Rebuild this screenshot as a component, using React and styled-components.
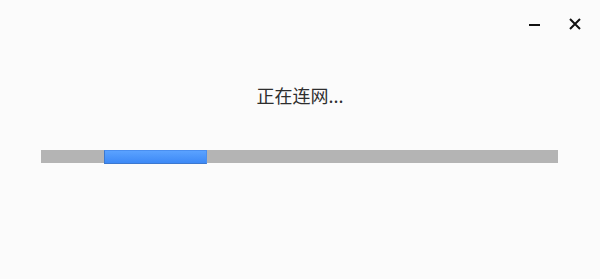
import React from "react";
import styled, { createGlobalStyle } from "styled-components";

const GlobalStyle = createGlobalStyle`
  html, body {
    margin: 0;
    padding: 0;
    background: #fbfbfb;
  }
  * {
    box-sizing: border-box;
  }
`;

const Window = styled.div`
  width: 600px;
  height: 279px;
  background: #fbfbfb;
  display: flex;
  flex-direction: column;
  font-family: "Noto Sans CJK SC", "Noto Sans", sans-serif;
`;

const TitleBar = styled.div`
  display: flex;
  justify-content: flex-end;
  gap: 19px;
  padding: 13px 14px 0 0;
  height: 35px;
`;

const WinButton = styled.button`
  width: 22px;
  height: 22px;
  padding: 0;
  border: none;
  background: transparent;
  display: flex;
  align-items: center;
  justify-content: center;
  color: #111;
  cursor: pointer;
`;

const Message = styled.div`
  margin-top: 48px;
  height: 24px;
  line-height: 24px;
  text-align: center;
  font-size: 18px;
  color: #2e2e2e;
`;

const Track = styled.div`
  position: relative;
  margin: 43px 42px 0 41px;
  height: 13px;
  background: #b4b4b4;
`;

const Thumb = styled.div`
  position: absolute;
  top: 0;
  left: ${(p) => p.$left}px;
  width: ${(p) => p.$width}px;
  height: 14px;
  background: linear-gradient(#5aa2ff, #3d89f6);
  border: 1px solid #3c78cf;
  border-top-color: #4a8ff0;
  border-right-color: #4a8ff0;
`;

const MinimizeIcon = () => (
  <svg width="11" height="11" viewBox="0 0 11 11">
    <rect x="0" y="5" width="11" height="2" fill="currentColor" />
  </svg>
);

const CloseIcon = () => (
  <svg width="12" height="12" viewBox="0 0 12 12">
    <path d="M1 1 L11 11 M11 1 L1 11" stroke="currentColor" strokeWidth="2" />
  </svg>
);

export default function App() {
  return (
    <>
      <GlobalStyle />
      <Window>
        <TitleBar>
          <WinButton aria-label="minimize">
            <MinimizeIcon />
          </WinButton>
          <WinButton aria-label="close">
            <CloseIcon />
          </WinButton>
        </TitleBar>
        <Message>正在连网...</Message>
        <Track>
          <Thumb $left={63} $width={103} />
        </Track>
      </Window>
    </>
  );
}
